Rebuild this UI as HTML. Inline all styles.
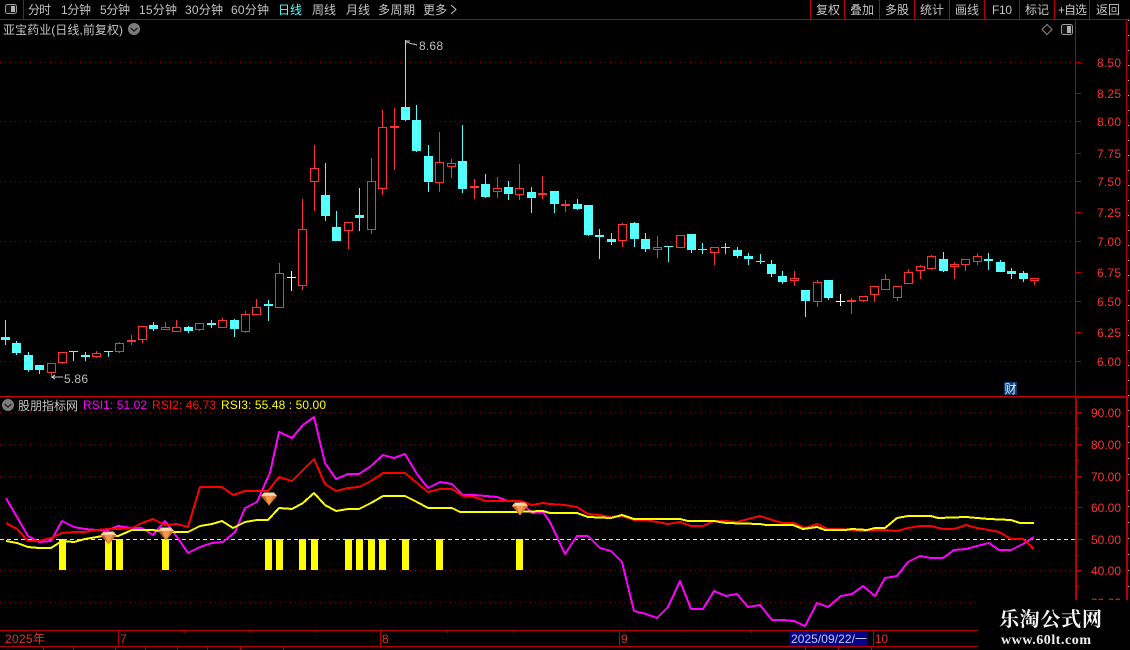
<!DOCTYPE html>
<html>
<head>
<meta charset="utf-8">
<title>亚宝药业</title>
<style>
html,body{margin:0;padding:0;background:#000;width:1130px;height:650px;overflow:hidden}
svg{display:block}
text{font-family:"Liberation Sans","Noto Sans CJK SC",sans-serif;font-size:12px}
.m{fill:#c4c4c4}
.a{fill:#ff3232}
.g{fill:#bdbdbd}
</style>
</head>
<body>
<svg width="1130" height="650" viewBox="0 0 1130 650" xmlns="http://www.w3.org/2000/svg">
<rect width="1130" height="650" fill="#000"/>

<!-- grid -->
<g shape-rendering="crispEdges" stroke="#8c0000" stroke-width="1" stroke-dasharray="1 4" fill="none">
<path d="M0 62.5H1075M0 121.5H1075M0 181.5H1075M0 241.5H1075M0 301.5H1075M0 361.5H1075"/>
<path d="M0 412.5H1075M0 444.5H1075M0 476.5H1075M0 507.5H1075M0 570.5H1075M0 602.5H1075"/>
</g>

<!-- frame lines -->
<g shape-rendering="crispEdges" stroke="#b80000" fill="none">
<path d="M0 19.5H1130M23.5 0V19M810.5 0V19M844.5 0V19M879.5 0V19M914.5 0V19M949.5 0V19M984.5 0V19M1019.5 0V19M1054.5 0V19M1089.5 0V19"/>
<path d="M1075.5 20V396M1126.5 20V396"/>
<path d="M0 396.5H1075" stroke="#d00000"/>
<path d="M1075 397H1128" stroke-width="2"/>
<path d="M1076 397V600M1127 397V600" stroke-width="2"/>
<path d="M1075 62.5h6M1075 93.5h6M1075 121.5h6M1075 153.5h6M1075 181.5h6M1075 212.5h6M1075 241.5h6M1075 272.5h6M1075 301.5h6M1075 332.5h6M1075 361.5h6"/>
<path d="M1077 412.5h5M1077 444.5h5M1077 476.5h5M1077 507.5h5M1077 539.5h5M1077 570.5h5M1077 428.5h2M1077 460.5h2M1077 492.5h2M1077 523.5h2M1077 555.5h2M1077 586.5h2"/>
<path d="M1128.5 20V396" stroke-dasharray="1 14" stroke="#c8c8c8"/>
<path d="M1128.5 410V600" stroke-dasharray="1 15" stroke="#c8c8c8"/>
<path d="M0 630.5H978M0 646.5H978M118.5 631V646M380.5 631V646M619.5 631V646M873.5 631V646"/>
<path d="M184.5 630v3M250.5 630v3M315.5 630v3M447.5 630v3M513.5 630v3M685.5 630v3M751.5 630v3M43.5 647v3M73.5 647v3M115.5 647v3M145.5 647v3M177.5 647v3M207.5 647v3M240.5 647v3M283.5 647v3M805.5 647v3M838.5 647v3M871.5 647v3"/>
</g>

<!-- candles -->
<g shape-rendering="crispEdges">
<path fill="none" stroke="#54ffff" d="M5.5 320V345M16.5 341V355M28.5 352V372M39.5 365V374M73.5 351V361M85.5 352V361M108.5 351V357M153.5 322V331M188.5 326V333M211.5 320V328M234.5 319V337M268.5 300V321M325.5 163V221M336.5 211V241M359.5 188V231M405.5 40V121M416.5 105V152M428.5 145V192M462.5 125V193M485.5 174V198M508.5 181V200M531.5 187V213M554.5 191V213M577.5 199V210M588.5 205V236M599.5 229V259M611.5 233V245M634.5 222V247M645.5 233V252M668.5 246V262M691.5 234V253M702.5 243V254M725.5 243V254M737.5 247V258M748.5 253V265M760.5 254V264M771.5 260V277M782.5 271V284M805.5 290V317M828.5 280V300M943.5 252V272M988.5 253V270M1000.5 260V272M1011.5 268V279M1023.5 271V282"/>
<path fill="#54ffff" d="M1 337h9v3h-9zM12 343h9v10h-9zM24 355h9v15h-9zM35 365h9v5h-9zM69 351h9v1h-9zM81 355h9v2h-9zM104 351h9v1h-9zM149 325h9v4h-9zM184 327h9v4h-9zM207 323h9v2h-9zM230 320h9v9h-9zM264 304h9v2h-9zM321 195h9v21h-9zM332 227h9v14h-9zM355 215h9v3h-9zM401 107h9v13h-9zM412 120h9v31h-9zM424 156h9v26h-9zM458 161h9v28h-9zM481 184h9v13h-9zM504 187h9v7h-9zM527 192h9v6h-9zM550 191h9v13h-9zM573 204h9v5h-9zM584 205h9v30h-9zM595 235h9v2h-9zM607 239h9v3h-9zM630 223h9v16h-9zM641 239h9v10h-9zM664 246h9v1h-9zM687 234h9v16h-9zM698 249h9v1h-9zM721 247h9v1h-9zM733 250h9v6h-9zM744 256h9v3h-9zM756 261h9v1h-9zM767 264h9v10h-9zM778 276h9v6h-9zM801 290h9v11h-9zM824 280h9v18h-9zM939 259h9v12h-9zM984 259h9v2h-9zM996 262h9v10h-9zM1007 271h9v3h-9zM1019 273h9v6h-9z"/>
<path fill="none" stroke="#ff3232" d="M51.5 363V378M62.5 352V364M96.5 351V358M119.5 342V353M131.5 335V345M142.5 326V343M165.5 322V330M176.5 320V332M199.5 323V331M222.5 318V328M245.5 311V333M256.5 299V315M279.5 263V308M302.5 199V290M314.5 145V211M348.5 222V249M371.5 158V234M382.5 110V195M394.5 108V170M439.5 132V192M451.5 159V178M474.5 179V199M497.5 177V198M519.5 164V200M542.5 176V199M565.5 200V212M622.5 223V247M657.5 236V258M680.5 235V248M714.5 247V265M794.5 271V286M817.5 280V307M851.5 298V314M863.5 296V302M874.5 286V302M885.5 274V290M897.5 286V301M908.5 269V284M920.5 265V279M931.5 255V270M954.5 262V279M965.5 259V271M977.5 253V265M1034.5 278V285"/>
<path fill="#000" stroke="#ff3232" d="M47.5 363.5h8v9h-8zM58.5 352.5h8v10h-8zM92.5 353.5h8v3h-8zM115.5 343.5h8v8h-8zM138.5 326.5h8v13h-8zM161.5 327.5h8v2h-8zM172.5 327.5h8v4h-8zM195.5 323.5h8v6h-8zM218.5 320.5h8v7h-8zM241.5 314.5h8v17h-8zM252.5 307.5h8v7h-8zM275.5 273.5h8v34h-8zM298.5 229.5h8v56h-8zM310.5 168.5h8v13h-8zM344.5 222.5h8v8h-8zM367.5 181.5h8v48h-8zM378.5 127.5h8v61h-8zM435.5 162.5h8v20h-8zM447.5 163.5h8v3h-8zM493.5 188.5h8v3h-8zM515.5 188.5h8v6h-8zM618.5 224.5h8v16h-8zM653.5 247.5h8v2h-8zM676.5 235.5h8v12h-8zM710.5 247.5h8v5h-8zM790.5 278.5h8v2h-8zM813.5 282.5h8v19h-8zM859.5 296.5h8v4h-8zM870.5 286.5h8v8h-8zM881.5 279.5h8v10h-8zM893.5 286.5h8v11h-8zM904.5 272.5h8v11h-8zM916.5 266.5h8v4h-8zM927.5 256.5h8v12h-8zM950.5 264.5h8v2h-8zM961.5 259.5h8v5h-8zM973.5 256.5h8v5h-8zM1030.5 278.5h8v2h-8z"/>
<path fill="#ff3232" d="M127 340h9v2h-9zM390 126h9v2h-9zM470 186h9v2h-9zM538 193h9v2h-9zM561 204h9v2h-9zM847 300h9v2h-9z"/>
<path fill="none" stroke="#fff" d="M291.5 271V291M287 277.5h9M840.5 294V306M836 301.5h9"/>
</g>

<!-- high/low marks -->
<path d="M406 41V44M406 41h4M407 42l5 2 2 0 3 1M52 377h11M52 377l3-2M52 377l3 2" stroke="#c4c4c4" fill="none" shape-rendering="crispEdges"/>
<text x="419" y="50" class="g" textLength="24">8.68</text>
<text x="64" y="383" class="g" textLength="24">5.86</text>

<!-- 财 -->
<rect x="1004" y="382" width="13" height="13" fill="#0a3c78"/>
<text x="1004.5" y="393" fill="#e8f4ff">财</text>

<!-- indicator bars -->
<path shape-rendering="crispEdges" fill="#ffff00" d="M59 539h7v31h-7zM105 539h7v31h-7zM116 539h7v31h-7zM162 539h7v31h-7zM265 539h7v31h-7zM276 539h7v31h-7zM299 539h7v31h-7zM311 539h7v31h-7zM345 539h7v31h-7zM356 539h7v31h-7zM368 539h7v31h-7zM379 539h7v31h-7zM402 539h7v31h-7zM436 539h7v31h-7zM516 539h7v31h-7z"/>
<path shape-rendering="crispEdges" stroke="#ffff00" stroke-dasharray="4 3" fill="none" d="M0 539.5H1075"/>

<!-- RSI lines -->
<g fill="none" stroke-width="2" shape-rendering="crispEdges" stroke-linejoin="round">
<polyline stroke="#ff00ff" points="6,498 17,517 28,536 39,542 51,541 62,521 74,527 85,529 97,530 108,530 118,526 132,528 142,528 153,535 165,521 177,537 188,553 200,547 212,543 223,542 235,532 245,508 257,502 268,477 270,473 279,432 292,438 303,425 314,417 325,463 336,479 348,474 359,474 371,466 383,455 394,458 405,454 417,474 428,488 440,482 452,484 463,495 474,495 486,496 497,497 508,501 520,501 532,513 543,512 550,522 565,554 577,536 588,536 600,548 611,551 622,562 634,611 646,614 657,618 668,607 680,581 691,609 703,609 714,591 726,596 737,594 748,607 760,605 772,620 783,620 794,621 805,626 817,603 828,607 841,596 852,594 863,586 875,596 885,578 897,576 908,562 920,556 931,558 943,558 954,550 966,549 977,546 989,543 999,550 1011,550 1023,544 1034,537"/>
<polyline stroke="#ff0000" points="6,523 17,529 28,541 39,541 51,538 62,533 74,532 85,532 97,530 108,529 118,529 132,528 142,523 153,519 165,525 177,524 188,527 200,487 212,487 222,487 233,495 245,491 257,491 268,491 279,477 292,481 314,459 325,484 336,491 348,488 359,487 371,481 383,473 405,473 417,483 428,492 440,489 452,489 463,496 474,497 486,501 497,501 508,501 520,501 532,505 543,503 550,504 565,505 577,507 588,514 600,515 611,517 622,516 634,520 646,520 657,522 668,524 680,522 691,526 703,526 714,521 726,521 737,522 748,519 760,516 772,520 783,523 794,523 805,528 817,524 828,529 841,529 852,530 863,531 875,530 885,530 897,531 908,528 920,526 931,526 943,529 954,529 966,525 977,528 989,530 999,532 1011,539 1023,539 1034,549"/>
<polyline stroke="#ffff00" points="6,541 17,543 28,547 39,548 51,548 62,541 74,542 85,539 97,537 108,535 118,536 132,530 142,530 153,530 165,532 177,532 188,532 200,526 212,524 222,521 233,528 245,522 257,520 268,520 279,508 292,509 303,503 314,493 325,505 336,511 348,509 359,509 371,503 383,496 405,496 417,502 428,508 440,508 452,508 460,512 474,512 513,512 543,511 550,513 577,513 588,517 611,518 622,515 634,519 680,519 688,521 714,521 726,523 760,524 766,525 793,525 803,529 817,527 825,530 845,530 852,529 867,530 875,528 885,528 897,518 908,516 931,516 938,518 966,517 989,519 1011,520 1020,523 1034,523"/>
</g>

<!-- gems -->
<defs>
<g id="gem">
<polygon points="-8,-3 -5,-6.500 5,-6.500 8,-3 0,6.500" fill="#d9772e"/>
<polygon points="-8,-3 -5,-6.500 5,-6.500 8,-3" fill="#f8c890"/>
<polygon points="-4,-3 4,-3 0,6.500" fill="#f09a50"/>
<polygon points="-7,-2 -4,-2 -1,4" fill="#b85f22"/>
<path d="M-4-5h8" stroke="#fff0dc" stroke-width="1"/>
</g>
</defs>
<use href="#gem" x="108.500" y="538"/>
<use href="#gem" x="166" y="534"/>
<use href="#gem" x="269" y="499"/>
<use href="#gem" x="520" y="509"/>

<!-- top toolbar -->
<g>
<rect x="5.500" y="4.500" width="11" height="9" rx="2" fill="#111" stroke="#9a9a9a"/>
<rect x="11" y="6" width="4" height="6" fill="#b0b0b0"/>
<text x="28" y="14" class="m" textLength="23">分时</text>
<text x="61" y="14" class="m" textLength="30">1分钟</text>
<text x="100" y="14" class="m" textLength="30">5分钟</text>
<text x="139" y="14" class="m" textLength="38">15分钟</text>
<text x="185" y="14" class="m" textLength="38">30分钟</text>
<text x="231" y="14" class="m" textLength="38">60分钟</text>
<text x="278" y="14" fill="#54ffff" textLength="24">日线</text>
<text x="312" y="14" class="m" textLength="24">周线</text>
<text x="346" y="14" class="m" textLength="24">月线</text>
<text x="378" y="14" class="m" textLength="37">多周期</text>
<text x="423" y="14" class="m" textLength="24">更多</text>
<path d="M451 5l5 4.500-5 4.500" fill="none" stroke="#c4c4c4"/>
<text x="816" y="14" class="m" textLength="24">复权</text>
<text x="850" y="14" class="m" textLength="24">叠加</text>
<text x="885" y="14" class="m" textLength="24">多股</text>
<text x="920" y="14" class="m" textLength="24">统计</text>
<text x="955" y="14" class="m" textLength="24">画线</text>
<text x="992" y="14" class="m" textLength="20">F10</text>
<text x="1025" y="14" class="m" textLength="24">标记</text>
<text x="1058" y="14" class="m" textLength="29">+自选</text>
<text x="1096" y="14" class="m" textLength="24">返回</text>
</g>

<!-- title -->
<text x="3" y="34" class="m" textLength="120">亚宝药业(日线,前复权)</text>
<circle cx="134" cy="29" r="6" fill="#7c7c7c"/>
<path d="M130.500 28l3.500 3 3.500-3" fill="none" stroke="#1c1c1c" stroke-width="1.300"/>
<path d="M1047 24.500l5 5-5 5-5-5z" fill="none" stroke="#8a8a8a"/>
<rect x="1061.500" y="24.500" width="11" height="10" rx="2" fill="#111" stroke="#9a9a9a"/>
<rect x="1067" y="26" width="4" height="7" fill="#b0b0b0"/>

<!-- right axis -->
<g class="a">
<text x="1097" y="67" textLength="24">8.50</text>
<text x="1097" y="98" textLength="24">8.25</text>
<text x="1097" y="126" textLength="24">8.00</text>
<text x="1097" y="158" textLength="24">7.75</text>
<text x="1097" y="186" textLength="24">7.50</text>
<text x="1097" y="217" textLength="24">7.25</text>
<text x="1097" y="246" textLength="24">7.00</text>
<text x="1097" y="277" textLength="24">6.75</text>
<text x="1097" y="306" textLength="24">6.50</text>
<text x="1097" y="337" textLength="24">6.25</text>
<text x="1097" y="366" textLength="24">6.00</text>
<text x="1091" y="417" textLength="30">90.00</text>
<text x="1091" y="449" textLength="30">80.00</text>
<text x="1091" y="481" textLength="30">70.00</text>
<text x="1091" y="512" textLength="30">60.00</text>
<text x="1091" y="544" textLength="30">50.00</text>
<text x="1091" y="575" textLength="30">40.00</text>
<text x="1091" y="607" textLength="30">30.00</text>
</g>

<!-- indicator header -->
<circle cx="8" cy="405" r="6" fill="#7c7c7c"/>
<path d="M4.500 404l3.500 3 3.500-3" fill="none" stroke="#1c1c1c" stroke-width="1.300"/>
<text x="18" y="410" class="m" textLength="60">股朋指标网</text>
<text x="83" y="409" fill="#ff00ff" textLength="64">RSI1: 51.02</text>
<text x="152" y="409" fill="#ff1010" textLength="64">RSI2: 46.73</text>
<text x="221" y="409" fill="#ffff00" textLength="105">RSI3: 55.48 : 50.00</text>

<!-- time axis -->
<text x="5" y="643" fill="#e03030" textLength="40">2025年</text>
<text x="120" y="643" fill="#e03030">7</text>
<text x="382" y="643" fill="#e03030">8</text>
<text x="621" y="643" fill="#e03030">9</text>
<rect x="789" y="631" width="79" height="15" fill="#000088"/>
<text x="791" y="643" fill="#c8c8e8" textLength="76">2025/09/22/一</text>
<text x="875" y="643" fill="#e03030" textLength="13">10</text>

<!-- watermark -->
<rect x="978" y="600" width="152" height="50" fill="#000"/>
<text x="999" y="626" style="font-family:'Liberation Serif','Noto Serif CJK SC',serif;font-size:20px;font-weight:700" fill="#f4f4f4" textLength="103">乐淘公式网</text>
<text x="1001" y="644" style="font-family:'Liberation Serif',serif;font-size:14px;font-weight:700" fill="#f0f0f0" textLength="90">www.60lt.com</text>
</svg>
</body>
</html>
